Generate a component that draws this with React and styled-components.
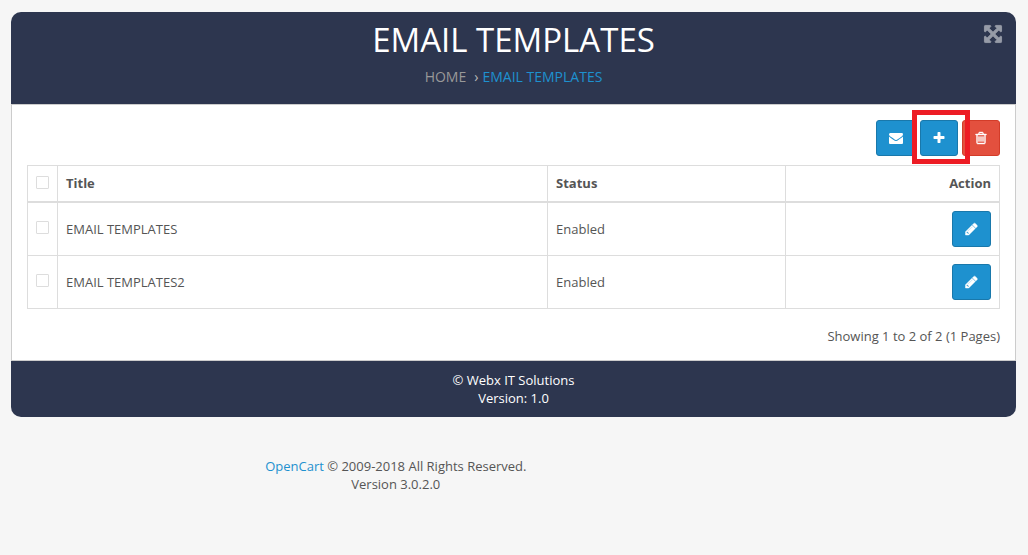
import React, { useState } from 'react';
import styled, { createGlobalStyle, css } from 'styled-components';

const GlobalStyle = createGlobalStyle`
  * {
    box-sizing: border-box;
  }
  body {
    margin: 0;
    background: #f6f6f6;
    color: #4c4d5a;
    font-family: 'Open Sans', 'Noto Sans', sans-serif;
    font-size: 13px;
    line-height: 18px;
  }
`;

const Page = styled.div`
  padding: 12px 12px 0 11px;
`;

const Header = styled.header`
  position: relative;
  height: 92px;
  padding-top: 8px;
  background: #2d364f;
  border-radius: 10px 10px 0 0;
  text-align: center;
`;

const Title = styled.h1`
  margin: 0;
  color: #fff;
  font-size: 33px;
  font-weight: 400;
  line-height: 40px;
`;

const Breadcrumb = styled.nav`
  display: flex;
  justify-content: center;
  margin-top: 8px;
  color: #bbb;
  font-size: 14px;
`;

const Crumb = styled.a`
  color: ${(props) => (props.$active ? '#1e91cf' : '#999')};
  text-decoration: none;
`;

const Separator = styled.span`
  margin: 0 4px 0 8px;
`;

const FullscreenButton = styled.button`
  position: absolute;
  top: 12px;
  right: 13px;
  display: flex;
  padding: 0;
  border: 0;
  background: none;
  color: #969ba7;
  cursor: pointer;
`;

const Panel = styled.main`
  padding: 15px;
  background: #fff;
  border: 1px solid #ccc;
`;

const Toolbar = styled.div`
  display: flex;
  justify-content: flex-end;
  gap: 4px;
  margin-bottom: 9px;
`;

const buttonColors = {
  primary: css`
    background: #1e91cf;
    border-color: #1978ab;
  `,
  danger: css`
    background: #e3503e;
    border-color: #d33c29;
  `,
};

const Button = styled.button`
  display: inline-flex;
  align-items: center;
  justify-content: center;
  height: 36px;
  padding: 0 12px;
  border: 1px solid;
  border-radius: 3px;
  color: #fff;
  vertical-align: top;
  cursor: pointer;
  ${(props) => buttonColors[props.$variant || 'primary']}
`;

const Highlight = styled.div`
  position: relative;
  z-index: 1;

  &::after {
    content: '';
    position: absolute;
    inset: -10px -12px -8px -8px;
    border: 5px solid #ed1c24;
    pointer-events: none;
  }
`;

const Table = styled.table`
  width: 100%;
  border-collapse: collapse;
  table-layout: fixed;
`;

const Column = styled.col`
  width: ${(props) => props.$width};
`;

const cell = css`
  padding: 8px;
  border: 1px solid #ddd;
  text-align: ${(props) => props.$align || 'left'};
  vertical-align: middle;
`;

const HeadCell = styled.th`
  ${cell}
  border-bottom-width: 2px;
  color: #555;
  font-weight: 700;
  line-height: 19px;
`;

const Cell = styled.td`
  ${cell}
  color: #555;
`;

const Checkbox = styled.input`
  appearance: none;
  display: block;
  width: 13px;
  height: 13px;
  margin: 0 0 3px;
  background: #fff;
  border: 1px solid #ddd;
  border-radius: 1px;

  &:checked {
    background: #1e91cf;
  }
`;

const Results = styled.div`
  margin-top: 18px;
  color: #555;
  text-align: right;
`;

const PanelFooter = styled.footer`
  padding: 10px;
  background: #2d364f;
  border-radius: 0 0 10px 10px;
  color: #fff;
  font-weight: 500;
  text-align: center;
`;

const Copyright = styled.footer`
  width: 77%;
  margin-top: 40px;
  color: #555;
  text-align: center;
`;

const Link = styled.a`
  color: #1e91cf;
  text-decoration: none;
`;

const icons = {
  envelope: {
    width: 14,
    viewBox: '0 0 1792 1792',
    d: 'M1792 710v794q0 66-47 113t-113 47h-1472q-66 0-113-47t-47-113v-794q44 49 101 87 362 246 497 345 57 42 92.5 65.5t94.5 48 110 24.5h2q51 0 110-24.5t94.5-48 92.5-65.5q170-123 498-345 57-39 100-87zm0-294q0 79-49 151t-122 123q-376 261-468 325-10 7-42.5 31t-54 38.5-52 32.5-57.5 27-50 9h-2q-23 0-50-9t-57.5-27-52-32.5-54-38.5-42.5-31q-91-64-262-182.5t-205-142.5q-62-42-117-115.5t-55-136.5q0-78 41.5-130t118.5-52h1472q65 0 112.5 47t47.5 113z',
  },
  plus: {
    width: 12,
    viewBox: '128 0 1536 1792',
    d: 'M1600 736v192q0 40-28 68t-68 28h-416v416q0 40-28 68t-68 28h-192q-40 0-68-28t-28-68v-416h-416q-40 0-68-28t-28-68v-192q0-40 28-68t68-28h416v-416q0-40 28-68t68-28h192q40 0 68 28t28 68v416h416q40 0 68 28t28 68z',
  },
  trash: {
    width: 12,
    viewBox: '128 0 1536 1792',
    weight: 50,
    d: 'M704 736v576q0 14-9 23t-23 9h-64q-14 0-23-9t-9-23v-576q0-14 9-23t23-9h64q14 0 23 9t9 23zm256 0v576q0 14-9 23t-23 9h-64q-14 0-23-9t-9-23v-576q0-14 9-23t23-9h64q14 0 23 9t9 23zm256 0v576q0 14-9 23t-23 9h-64q-14 0-23-9t-9-23v-576q0-14 9-23t23-9h64q14 0 23 9t9 23zm128 724v-948h-896v948q0 22 7 40.5t14.5 27 10.5 8.5h832q3 0 10.5-8.5t14.5-27 7-40.5zm-672-1076h448l-48-117q-7-9-17-11h-317q-10 2-17 11zm928 32v64q0 14-9 23t-23 9h-96v948q0 83-47 143.5t-113 60.5h-832q-66 0-113-58.5t-47-141.5v-952h-96q-14 0-23-9t-9-23v-64q0-14 9-23t23-9h309l70-167q15-37 54-63t79-26h320q40 0 79 26t54 63l70 167h309q14 0 23 9t9 23z',
  },
  pencil: {
    width: 13,
    viewBox: '64 0 1664 1792',
    weight: 60,
    d: 'M491 1536l91-91-235-235-91 91v107h128v128h107zm523-928q0-22-22-22-10 0-17 7l-542 542q-7 7-7 17 0 22 22 22 10 0 17-7l542-542q7-7 7-17zm-54-192l416 416-832 832h-416v-416zm683 96q0 53-37 90l-166 166-416-416 166-165q36-38 90-38 53 0 91 38l235 234q37 39 37 91z',
  },
  arrows: {
    width: 20,
    height: 20,
    viewBox: '0 0 1792 1792',
    weight: 80,
    d: 'M1411 541l-355 355 355 355 144-144q29-31 70-14 39 17 39 59v448q0 26-19 45t-45 19h-448q-42 0-59-40-17-39 14-69l144-144-355-355-355 355 144 144q31 30 14 69-17 40-59 40h-448q-26 0-45-19t-19-45v-448q0-42 40-59 39-17 69 14l144 144 355-355-355-355-144 144q-19 19-45 19-12 0-24-5-40-17-40-59v-448q0-26 19-45t45-19h448q42 0 59 40 17 39-14 69l-144 144 355 355 355-355-144-144q-31-30-14-69 17-40 59-40h448q26 0 45 19t19 45v448q0 42-39 59-13 5-25 5-26 0-45-19z',
  },
};

const Icon = ({ name }) => {
  const { width, height = 14, viewBox, weight = 0, d } = icons[name];
  return (
    <svg width={width} height={height} viewBox={viewBox} fill="currentColor" aria-hidden="true">
      <path d={d} stroke="currentColor" strokeWidth={weight} />
    </svg>
  );
};

const templates = [
  { id: 1, title: 'EMAIL TEMPLATES', status: 'Enabled' },
  { id: 2, title: 'EMAIL TEMPLATES2', status: 'Enabled' },
];

const App = () => {
  const [selected, setSelected] = useState([]);

  const toggleAll = (event) => {
    setSelected(event.target.checked ? templates.map((t) => t.id) : []);
  };

  const toggle = (id) => {
    setSelected(selected.includes(id) ? selected.filter((s) => s !== id) : [...selected, id]);
  };

  return (
    <>
      <GlobalStyle />
      <Page>
        <Header>
          <Title>EMAIL TEMPLATES</Title>
          <Breadcrumb>
            <Crumb href="#home">HOME</Crumb>
            <Separator>›</Separator>
            <Crumb href="#templates" $active>EMAIL TEMPLATES</Crumb>
          </Breadcrumb>
          <FullscreenButton type="button" aria-label="Fullscreen">
            <Icon name="arrows" />
          </FullscreenButton>
        </Header>
        <Panel>
          <Toolbar>
            <Button type="button" aria-label="Send mail"><Icon name="envelope" /></Button>
            <Highlight>
              <Button type="button" aria-label="Add new"><Icon name="plus" /></Button>
            </Highlight>
            <Button type="button" aria-label="Delete" $variant="danger"><Icon name="trash" /></Button>
          </Toolbar>
          <Table>
            <colgroup>
              <Column $width="30px" />
              <Column />
              <Column $width="24.5%" />
              <Column $width="22%" />
            </colgroup>
            <thead>
              <tr>
                <HeadCell>
                  <Checkbox
                    type="checkbox"
                    aria-label="Select all"
                    checked={selected.length === templates.length}
                    onChange={toggleAll}
                  />
                </HeadCell>
                <HeadCell>Title</HeadCell>
                <HeadCell>Status</HeadCell>
                <HeadCell $align="right">Action</HeadCell>
              </tr>
            </thead>
            <tbody>
              {templates.map((template) => (
                <tr key={template.id}>
                  <Cell>
                    <Checkbox
                      type="checkbox"
                      aria-label={`Select ${template.title}`}
                      checked={selected.includes(template.id)}
                      onChange={() => toggle(template.id)}
                    />
                  </Cell>
                  <Cell>{template.title}</Cell>
                  <Cell>{template.status}</Cell>
                  <Cell $align="right">
                    <Button type="button" aria-label="Edit"><Icon name="pencil" /></Button>
                  </Cell>
                </tr>
              ))}
            </tbody>
          </Table>
          <Results>Showing 1 to 2 of 2 (1 Pages)</Results>
        </Panel>
        <PanelFooter>
          © Webx IT Solutions
          <br />
          Version: 1.0
        </PanelFooter>
      </Page>
      <Copyright>
        <Link href="#opencart">OpenCart</Link> © 2009-2018 All Rights Reserved.
        <br />
        Version 3.0.2.0
      </Copyright>
    </>
  );
};

export default App;
